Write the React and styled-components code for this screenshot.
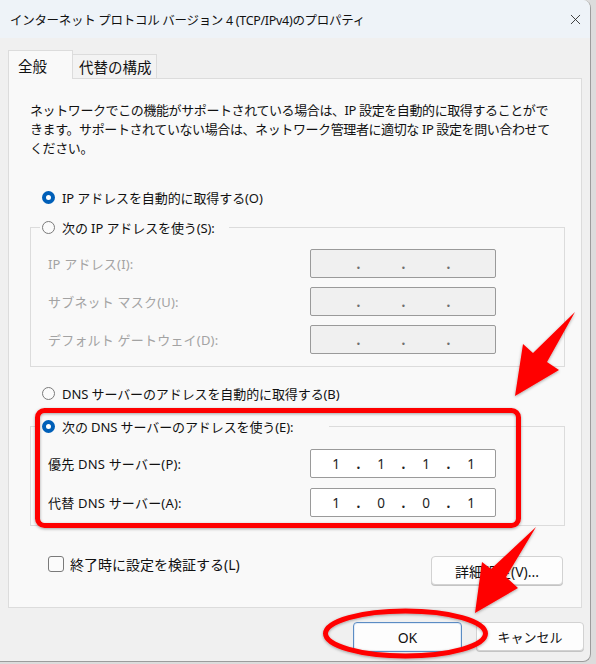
import React from "react";
import styled, { createGlobalStyle } from "styled-components";
import { X } from "lucide-react";

const GlobalStyle = createGlobalStyle`
    html, body {
        margin: 0;
        padding: 0;
        background: #dcdcdc;
    }
    body {
        font-family: "Noto Sans", "Noto Sans CJK JP", sans-serif;
        color: #111;
    }
    * {
        box-sizing: border-box;
    }
`;

function Radio({ checked, children, inset }) {
    return (
        <RadioOption $inset={inset}>
            <RadioDot $checked={checked} />
            <span>{children}</span>
        </RadioOption>
    );
}

function IpField({ values, disabled }) {
    const parts = values || ["", "", "", ""];
    return (
        <IpBox $disabled={disabled}>
            {parts.map((v, i) => (
                <React.Fragment key={i}>
                    {i > 0 && <IpDot $disabled={disabled}>.</IpDot>}
                    <IpPart>{v}</IpPart>
                </React.Fragment>
            ))}
        </IpBox>
    );
}

export default function App() {
    return (
        <>
            <GlobalStyle />
            <Window>
                <TitleBar>
                    <Title>インターネット プロトコル バージョン 4 (TCP/IPv4)のプロパティ</Title>
                    <CloseButton>
                        <X size={17} strokeWidth={1.2} color="#222" />
                    </CloseButton>
                </TitleBar>
                <Body>
                    <TabRow>
                        <Tab $active>全般</Tab>
                        <Tab>代替の構成</Tab>
                    </TabRow>
                    <Panel>
                        <Description>
                            ネットワークでこの機能がサポートされている場合は、IP 設定を自動的に取得することがで<br />
                            きます。サポートされていない場合は、ネットワーク管理者に適切な IP 設定を問い合わせて<br />
                            ください。
                        </Description>

                        <OptionRow $top={29}>
                            <Radio checked inset={12}>IP アドレスを自動的に取得する(O)</Radio>
                        </OptionRow>
                        <Group $top={10} $pt={12} $pb={12}>
                            <Legend $extra={14}>
                                <Radio inset={0}>次の IP アドレスを使う(S):</Radio>
                            </Legend>
                            <FieldGrid $gap={9}>
                                <FieldLabel $disabled>IP アドレス(I):</FieldLabel>
                                <IpField disabled />
                                <FieldLabel $disabled>サブネット マスク(U):</FieldLabel>
                                <IpField disabled />
                                <FieldLabel $disabled>デフォルト ゲートウェイ(D):</FieldLabel>
                                <IpField disabled />
                            </FieldGrid>
                        </Group>

                        <OptionRow $top={16}>
                            <Radio inset={12}>DNS サーバーのアドレスを自動的に取得する(B)</Radio>
                        </OptionRow>
                        <Group $top={13} $pt={13} $pb={8}>
                            <Legend $extra={36}>
                                <Radio checked inset={0}>次の DNS サーバーのアドレスを使う(E):</Radio>
                            </Legend>
                            <FieldGrid $gap={10}>
                                <FieldLabel>優先 DNS サーバー(P):</FieldLabel>
                                <IpField values={["1", "1", "1", "1"]} />
                                <FieldLabel>代替 DNS サーバー(A):</FieldLabel>
                                <IpField values={["1", "0", "0", "1"]} />
                            </FieldGrid>
                        </Group>

                        <BottomRow>
                            <CheckOption>
                                <CheckBox />
                                <span>終了時に設定を検証する(L)</span>
                            </CheckOption>
                            <Button $width={132} $size={14}>詳細設定(V)...</Button>
                        </BottomRow>
                    </Panel>
                    <Footer>
                        <Button $width={109} $size={14} $primary>OK</Button>
                        <Button $width={108}>キャンセル</Button>
                    </Footer>
                </Body>

                {/* red annotations drawn over the dialog */}
                <Marks viewBox="0 0 591 662" width="591" height="662">
                    <defs>
                        <filter id="shade" x="-10%" y="-10%" width="120%" height="130%">
                            <feDropShadow dx="0" dy="1" stdDeviation="1.6" floodColor="#000" floodOpacity="0.35" />
                        </filter>
                    </defs>
                    <g filter="url(#shade)" fill="#ff0000" stroke="none">
                        <rect x="37.5" y="410.5" width="481" height="115" rx="7" fill="none" stroke="#ff0000" strokeWidth="5" />
                        <polygon points="575,312 547,362 559,370 515,396 523,344 533,353" />
                        <polygon points="536,527 506,577 518,588 475,613 482,562 491,569" />
                        <ellipse cx="405.5" cy="633.5" rx="80" ry="22.5" fill="none" stroke="#ff0000" strokeWidth="5" />
                    </g>
                </Marks>
            </Window>
        </>
    );
}

// ---------- styled components ----------
const Window = styled.div`
    position: relative;
    width: 591px;
    height: 662px;
    background: #f0f0f0;
    border-right: 1px solid #9c9c9c;
    border-bottom: 1px solid #9c9c9c;
    border-radius: 0 8px 8px 0;
    overflow: hidden;
    display: flex;
    flex-direction: column;
`;
const TitleBar = styled.div`
    height: 38px;
    flex: none;
    display: flex;
    align-items: center;
    justify-content: space-between;
    padding-left: 10px;
    background: #eef3f8;
`;
const Title = styled.div`
    font-size: 12.5px;
    letter-spacing: -0.3px;
    color: #111;
`;
const CloseButton = styled.div`
    width: 30px;
    height: 30px;
    display: flex;
    align-items: center;
    justify-content: center;
`;
const Body = styled.div`
    flex: 1;
    display: flex;
    flex-direction: column;
    padding: 12px 8px 0 8px;
`;
const TabRow = styled.div`
    display: flex;
    align-items: flex-end;
    height: 29px;
    margin-bottom: -1px;
    position: relative;
    z-index: 1;
`;
const Tab = styled.div`
    height: ${(p) => (p.$active ? "29px" : "25px")};
    width: ${(p) => (p.$active ? "65px" : "84px")};
    padding-left: ${(p) => (p.$active ? "9px" : "6px")};
    display: flex;
    align-items: center;
    font-size: 14.5px;
    color: #111;
    background: ${(p) => (p.$active ? "#f9f9f9" : "#f3f3f3")};
    border: 1px solid #dcdcdc;
    border-bottom: ${(p) => (p.$active ? "none" : "1px solid #dcdcdc")};
    border-left: ${(p) => (p.$active ? "1px solid #dcdcdc" : "none")};
`;
const Panel = styled.div`
    background: #f9f9f9;
    border: 1px solid #dcdcdc;
    padding: 22px 16px 22px 21px;
    display: flex;
    flex-direction: column;
`;
const Description = styled.p`
    margin: 0;
    font-size: 13px;
    line-height: 19px;
    letter-spacing: -0.4px;
    color: #111;
`;
const OptionRow = styled.div`
    margin-top: ${(p) => p.$top}px;
`;
const RadioOption = styled.label`
    display: flex;
    align-items: center;
    gap: 7px;
    height: 20px;
    padding-left: ${(p) => p.$inset}px;
    font-size: 13px;
    letter-spacing: -0.1px;
    color: #111;
    white-space: nowrap;
`;
const RadioDot = styled.span`
    width: 13px;
    height: 13px;
    border-radius: 50%;
    flex: none;
    background: ${(p) => (p.$checked ? "#fff" : "#fbfbfb")};
    border: ${(p) => (p.$checked ? "4px solid #005fb8" : "1px solid #7a7a7a")};
`;
const Group = styled.fieldset`
    margin: ${(p) => p.$top}px 0 0 0;
    padding: ${(p) => p.$pt}px 16px ${(p) => p.$pb}px 17px;
    border: 1px solid #dcdcdc;
    min-width: 0;
`;
const Legend = styled.legend`
    margin-left: -8px;
    padding: 0 ${(p) => p.$extra}px 0 2px;
`;
const FieldGrid = styled.div`
    display: grid;
    grid-template-columns: 262px 186px;
    grid-auto-rows: 29px;
    row-gap: ${(p) => p.$gap}px;
    align-items: center;
`;
const FieldLabel = styled.div`
    font-size: 13px;
    letter-spacing: 0.2px;
    color: ${(p) => (p.$disabled ? "#a3a3a3" : "#111")};
`;
const IpBox = styled.div`
    height: 29px;
    display: flex;
    align-items: center;
    padding-left: 7px;
    border: 1px solid #9a9a9a;
    border-radius: 2px;
    background: ${(p) => (p.$disabled ? "#f0f0f0" : "#ffffff")};
    font-family: "Noto Sans", sans-serif;
    font-size: 13.5px;
    color: #222;
`;
const IpPart = styled.span`
    width: 36px;
    text-align: center;
`;
const IpDot = styled.span`
    width: 9px;
    text-align: center;
    color: ${(p) => (p.$disabled ? "#6f6f6f" : "#222")};
    font-weight: bold;
`;
const BottomRow = styled.div`
    margin-top: 28px;
    display: flex;
    justify-content: space-between;
    align-items: flex-start;
    padding-left: 18px;
    padding-right: 2px;
`;
const CheckOption = styled.label`
    display: flex;
    align-items: center;
    gap: 6px;
    height: 20px;
    font-size: 14px;
    color: #111;
`;
const CheckBox = styled.span`
    width: 16px;
    height: 16px;
    border: 1px solid #7a7a7a;
    border-radius: 3px;
    background: #fbfbfb;
`;
const Button = styled.div`
    width: ${(p) => p.$width}px;
    height: ${(p) => (p.$primary !== undefined ? "30px" : "29px")};
    margin-top: 2px;
    display: flex;
    align-items: center;
    justify-content: center;
    font-size: ${(p) => p.$size || 13}px;
    color: #111;
    background: #fdfdfd;
    border: 1px solid ${(p) => (p.$primary ? "#5b8cc4" : "#d2d2d2")};
    border-radius: 4px;
    box-shadow: ${(p) => (p.$primary ? "inset 0 0 0 1px #e3ecf7" : "0 1px 0 #c4c4c4")};
`;
const Footer = styled.div`
    display: flex;
    justify-content: flex-end;
    gap: 14px;
    padding-top: 12px;
    margin-right: -2px;
`;
const Marks = styled.svg`
    position: absolute;
    top: 0;
    left: 0;
    pointer-events: none;
    z-index: 5;
`;
